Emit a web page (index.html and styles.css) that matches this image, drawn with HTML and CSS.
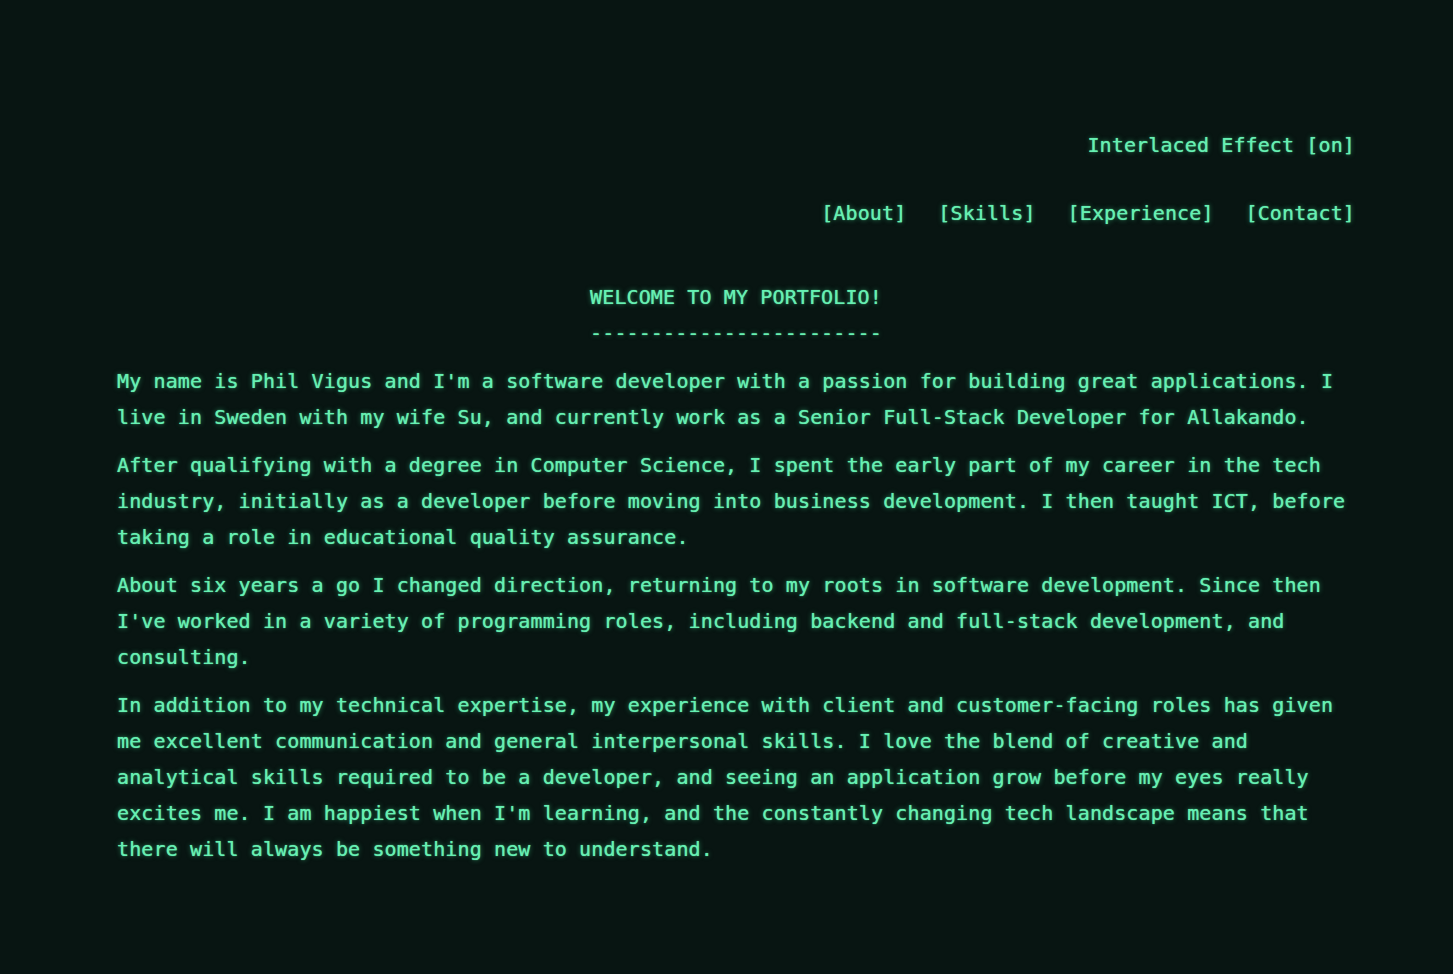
FILE: index.html
```html
<!DOCTYPE html>
<html lang="en">
<head>
<meta charset="utf-8">
<title>Phil Vigus - Portfolio</title>
<link rel="stylesheet" href="styles.css">
</head>
<body>
<div class="screen">
  <header class="header">
    <div class="toggle"><a href="#">Interlaced Effect [on]</a></div>
    <nav class="nav">
      <a href="#">[About]</a>
      <a href="#">[Skills]</a>
      <a href="#">[Experience]</a>
      <a href="#">[Contact]</a>
    </nav>
  </header>
  <main class="content">
    <h1 class="title">WELCOME TO MY PORTFOLIO!<br>------------------------</h1>
    <p>My name is Phil Vigus and I'm a software developer with a passion for building great applications. I live in Sweden with my wife Su, and currently work as a Senior Full-Stack Developer for Allakando.</p>
    <p>After qualifying with a degree in Computer Science, I spent the early part of my career in the tech industry, initially as a developer before moving into business development. I then taught ICT, before taking a role in educational quality assurance.</p>
    <p>About six years a go I changed direction, returning to my roots in software development. Since then I've worked in a variety of programming roles, including backend and full-stack development, and consulting.</p>
    <p>In addition to my technical expertise, my experience with client and customer-facing roles has given me excellent communication and general interpersonal skills. I love the blend of creative and analytical skills required to be a developer, and seeing an application grow before my eyes really excites me. I am happiest when I'm learning, and the constantly changing tech landscape means that there will always be something new to understand.</p>
  </main>
</div>
</body>
</html>
```
FILE: styles.css
```css
html, body {
  margin: 0;
  padding: 0;
  background: #081512;
}
body {
  font-family: "DejaVu Sans Mono", "Liberation Mono", monospace;
  font-size: 20px;
  letter-spacing: 0.12px;
  line-height: 36px;
  color: #66f0b2;
  text-shadow: 0 0 1px rgba(102, 240, 178, 0.9), 0 0 5px rgba(70, 230, 150, 0.55);
  min-height: 974px;
}
.screen {
  padding: 127px 98px 0 117px;
}
a {
  color: inherit;
  text-decoration: none;
}
.header {
  display: flex;
  flex-direction: column;
  align-items: flex-end;
  gap: 32px;
}
.nav {
  display: flex;
  gap: 32px;
}
.content {
  margin-top: 48px;
}
.title {
  margin: 0 0 12px;
  font-size: inherit;
  font-weight: normal;
  text-align: center;
  line-height: 36px;
}
.content p {
  margin: 0 0 12px;
}
```
